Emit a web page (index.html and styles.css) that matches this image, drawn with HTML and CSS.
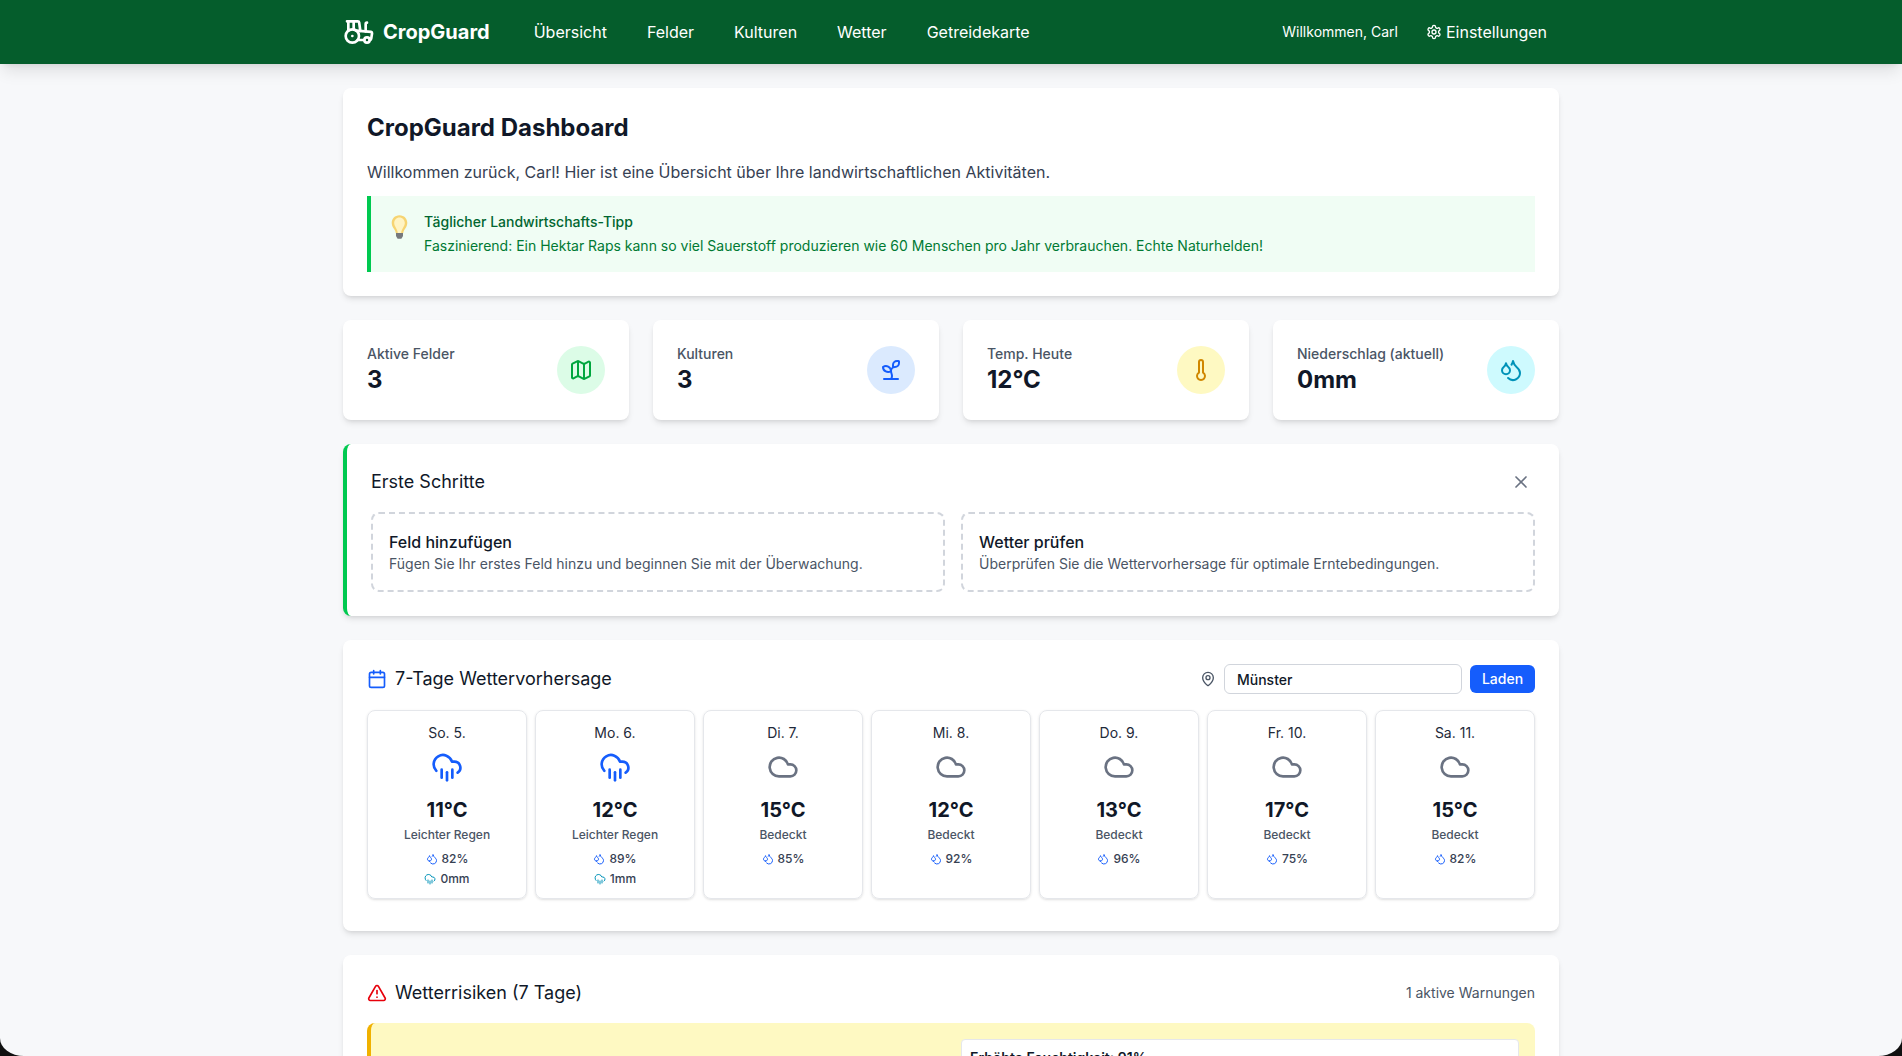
FILE: index.html
```html
<!DOCTYPE html>
<html lang="de">
<head>
<meta charset="utf-8">
<title>CropGuard Dashboard</title>
<link rel="stylesheet" href="styles.css">
</head>
<body>
<svg class="sprite" aria-hidden="true">
  <symbol id="i-tractor" viewBox="0 0 24 24"><path d="m10 11 11 .9a1 1 0 0 1 .8 1.1l-.665 4.158a1 1 0 0 1-.988.842H20"/><path d="M16 18h-5"/><path d="M18 5a1 1 0 0 0-1 1v5.573"/><path d="M3 4h8.129a1 1 0 0 1 .99.863L13 11.246"/><path d="M4 11V4"/><path d="M7 15h.01"/><path d="M8 10.1V4"/><circle cx="18" cy="18" r="2"/><circle cx="7" cy="15" r="5"/></symbol>
  <symbol id="i-gear" viewBox="0 0 24 24"><path d="M12.22 2h-.44a2 2 0 0 0-2 2v.18a2 2 0 0 1-1 1.73l-.43.25a2 2 0 0 1-2 0l-.15-.08a2 2 0 0 0-2.73.73l-.22.38a2 2 0 0 0 .73 2.73l.15.1a2 2 0 0 1 1 1.72v.51a2 2 0 0 1-1 1.74l-.15.09a2 2 0 0 0-.73 2.73l.22.38a2 2 0 0 0 2.73.73l.15-.08a2 2 0 0 1 2 0l.43.25a2 2 0 0 1 1 1.73V20a2 2 0 0 0 2 2h.44a2 2 0 0 0 2-2v-.18a2 2 0 0 1 1-1.73l.43-.25a2 2 0 0 1 2 0l.15.08a2 2 0 0 0 2.73-.73l.22-.39a2 2 0 0 0-.73-2.73l-.15-.08a2 2 0 0 1-1-1.74v-.5a2 2 0 0 1 1-1.74l.15-.09a2 2 0 0 0 .73-2.73l-.22-.38a2 2 0 0 0-2.73-.73l-.15.08a2 2 0 0 1-2 0l-.43-.25a2 2 0 0 1-1-1.73V4a2 2 0 0 0-2-2z"/><circle cx="12" cy="12" r="3"/></symbol>
  <symbol id="i-map" viewBox="0 0 24 24"><path d="M14.106 5.553a2 2 0 0 0 1.788 0l3.659-1.83A1 1 0 0 1 21 4.619v12.764a1 1 0 0 1-.553.894l-4.553 2.277a2 2 0 0 1-1.788 0l-4.212-2.106a2 2 0 0 0-1.788 0l-3.659 1.83A1 1 0 0 1 3 19.381V6.618a1 1 0 0 1 .553-.894l4.553-2.277a2 2 0 0 1 1.788 0z"/><path d="M15 5.764v15"/><path d="M9 3.236v15"/></symbol>
  <symbol id="i-sprout" viewBox="0 0 24 24"><path d="M14 9.536V7a4 4 0 0 1 4-4h1.5a.5.5 0 0 1 .5.5V5a4 4 0 0 1-4 4 4 4 0 0 0-4 4c0 2 1 3 1 5a5 5 0 0 1-1 3"/><path d="M4 9a5 5 0 0 1 8 4 5 5 0 0 1-8-4"/><path d="M5 21h14"/></symbol>
  <symbol id="i-thermo" viewBox="0 0 24 24"><path d="M14 4v10.54a4 4 0 1 1-4 0V4a2 2 0 0 1 4 0Z"/></symbol>
  <symbol id="i-drops" viewBox="0 0 24 24"><path d="M7 16.3c2.2 0 4-1.83 4-4.05 0-1.16-.57-2.26-1.71-3.19S7.29 6.75 7 5.3c-.29 1.45-1.14 2.84-2.29 3.76S3 11.1 3 12.25c0 2.22 1.8 4.05 4 4.05z"/><path d="M12.56 6.6A10.97 10.97 0 0 0 14 3.02c.5 2.5 2 4.9 4 6.5s3 3.5 3 5.5a6.98 6.98 0 0 1-11.91 4.97"/></symbol>
  <symbol id="i-x" viewBox="0 0 24 24"><path d="M18 6 6 18"/><path d="m6 6 12 12"/></symbol>
  <symbol id="i-cal" viewBox="0 0 24 24"><path d="M8 2v4"/><path d="M16 2v4"/><rect width="18" height="18" x="3" y="4" rx="2"/><path d="M3 10h18"/></symbol>
  <symbol id="i-pin" viewBox="0 0 24 24"><path d="M20 10c0 4.993-5.539 10.193-7.399 11.799a1 1 0 0 1-1.202 0C9.539 20.193 4 14.993 4 10a8 8 0 0 1 16 0"/><circle cx="12" cy="10" r="3"/></symbol>
  <symbol id="i-rain" viewBox="0 0 24 24"><path d="M4 14.899A7 7 0 1 1 15.71 8h1.79a4.5 4.5 0 0 1 2.5 8.242"/><path d="M16 14v6"/><path d="M8 14v6"/><path d="M12 16v6"/></symbol>
  <symbol id="i-cloud" viewBox="0 0 24 24"><path d="M17.5 19H9a7 7 0 1 1 6.71-9h1.79a4.5 4.5 0 1 1 0 9Z"/></symbol>
  <symbol id="i-alert" viewBox="0 0 24 24"><path d="m21.73 18-8-14a2 2 0 0 0-3.48 0l-8 14A2 2 0 0 0 4 21h16a2 2 0 0 0 1.73-3"/><path d="M12 9v4"/><path d="M12 17h.01"/></symbol>
</svg>
<div class="page">
  <header class="topbar">
    <div class="topbar-inner">
      <a class="brand"><svg class="ico ico-32"><use href="#i-tractor"/></svg><span>CropGuard</span></a>
      <nav class="nav">
        <a>Übersicht</a><a>Felder</a><a>Kulturen</a><a>Wetter</a><a>Getreidekarte</a>
      </nav>
      <div class="user">
        <span class="welcome">Willkommen, Carl</span>
        <a class="settings"><svg class="ico ico-16"><use href="#i-gear"/></svg>Einstellungen</a>
      </div>
    </div>
  </header>

  <main class="main">
    <section class="card">
      <h1 class="page-title">CropGuard Dashboard</h1>
      <p class="lead">Willkommen zurück, Carl! Hier ist eine Übersicht über Ihre landwirtschaftlichen Aktivitäten.</p>
      <div class="tip">
        <div class="bulb">
          <svg width="17" height="24" viewBox="0 0 17 24">
            <path class="bulb-glass" d="M8.5.3C3.800.3.700 3.900.700 8c0 3 1.700 5.100 3 7 .7 1.100 1 2.200 1.100 3.300h7.400c.1-1.100.4-2.200 1.100-3.300 1.300-1.900 3-4 3-7C16.300 3.900 13.200.3 8.500.3z"/>
            <path class="bulb-core" d="M8.500 2.500C5.300 2.500 3.200 5.100 3.200 8c0 3.600 3.300 5.500 3.600 10.300h3.400c.3-4.800 3.600-6.700 3.600-10.300 0-2.900-2.100-5.500-5.300-5.500z"/>
            <path class="bulb-base" d="M5 18h7v3l-1.600 2.800H6.600L5 21z"/>
          </svg>
        </div>
        <div>
          <div class="tip-title">Täglicher Landwirtschafts-Tipp</div>
          <div class="tip-text">Faszinierend: Ein Hektar Raps kann so viel Sauerstoff produzieren wie 60 Menschen pro Jahr verbrauchen. Echte Naturhelden!</div>
        </div>
      </div>
    </section>

    <section class="stats">
      <div class="stat">
        <div><div class="stat-label">Aktive Felder</div><div class="stat-value">3</div></div>
        <div class="stat-icon green"><svg class="ico ico-24"><use href="#i-map"/></svg></div>
      </div>
      <div class="stat">
        <div><div class="stat-label">Kulturen</div><div class="stat-value">3</div></div>
        <div class="stat-icon blue"><svg class="ico ico-24"><use href="#i-sprout"/></svg></div>
      </div>
      <div class="stat">
        <div><div class="stat-label">Temp. Heute</div><div class="stat-value">12°C</div></div>
        <div class="stat-icon yellow"><svg class="ico ico-24"><use href="#i-thermo"/></svg></div>
      </div>
      <div class="stat">
        <div><div class="stat-label">Niederschlag (aktuell)</div><div class="stat-value">0mm</div></div>
        <div class="stat-icon cyan"><svg class="ico ico-24"><use href="#i-drops"/></svg></div>
      </div>
    </section>

    <section class="card card-accent">
      <div class="row-between steps-head">
        <h2 class="section-title">Erste Schritte</h2>
        <svg class="ico ico-20 close"><use href="#i-x"/></svg>
      </div>
      <div class="steps">
        <div class="step">
          <div class="step-title">Feld hinzufügen</div>
          <div class="step-text">Fügen Sie Ihr erstes Feld hinzu und beginnen Sie mit der Überwachung.</div>
        </div>
        <div class="step">
          <div class="step-title">Wetter prüfen</div>
          <div class="step-text">Überprüfen Sie die Wettervorhersage für optimale Erntebedingungen.</div>
        </div>
      </div>
    </section>

    <section class="card">
      <div class="row-between forecast-head">
        <h2 class="section-title with-icon"><svg class="ico ico-20 c-blue"><use href="#i-cal"/></svg>7-Tage Wettervorhersage</h2>
        <div class="location">
          <svg class="ico ico-16 c-gray"><use href="#i-pin"/></svg>
          <input class="loc-input" type="text" value="Münster">
          <button class="btn" type="button">Laden</button>
        </div>
      </div>
      <div class="days">
        <div class="day">
          <div class="day-name">So. 5.</div>
          <svg class="ico ico-32 day-icon c-blue"><use href="#i-rain"/></svg>
          <div class="day-temp">11°C</div>
          <div class="day-desc">Leichter Regen</div>
          <div class="day-meta"><svg class="ico ico-12 c-blue"><use href="#i-drops"/></svg>82%</div>
          <div class="day-meta"><svg class="ico ico-12 c-cyan"><use href="#i-rain"/></svg>0mm</div>
        </div>
        <div class="day">
          <div class="day-name">Mo. 6.</div>
          <svg class="ico ico-32 day-icon c-blue"><use href="#i-rain"/></svg>
          <div class="day-temp">12°C</div>
          <div class="day-desc">Leichter Regen</div>
          <div class="day-meta"><svg class="ico ico-12 c-blue"><use href="#i-drops"/></svg>89%</div>
          <div class="day-meta"><svg class="ico ico-12 c-cyan"><use href="#i-rain"/></svg>1mm</div>
        </div>
        <div class="day">
          <div class="day-name">Di. 7.</div>
          <svg class="ico ico-32 day-icon c-slate"><use href="#i-cloud"/></svg>
          <div class="day-temp">15°C</div>
          <div class="day-desc">Bedeckt</div>
          <div class="day-meta"><svg class="ico ico-12 c-blue"><use href="#i-drops"/></svg>85%</div>
        </div>
        <div class="day">
          <div class="day-name">Mi. 8.</div>
          <svg class="ico ico-32 day-icon c-slate"><use href="#i-cloud"/></svg>
          <div class="day-temp">12°C</div>
          <div class="day-desc">Bedeckt</div>
          <div class="day-meta"><svg class="ico ico-12 c-blue"><use href="#i-drops"/></svg>92%</div>
        </div>
        <div class="day">
          <div class="day-name">Do. 9.</div>
          <svg class="ico ico-32 day-icon c-slate"><use href="#i-cloud"/></svg>
          <div class="day-temp">13°C</div>
          <div class="day-desc">Bedeckt</div>
          <div class="day-meta"><svg class="ico ico-12 c-blue"><use href="#i-drops"/></svg>96%</div>
        </div>
        <div class="day">
          <div class="day-name">Fr. 10.</div>
          <svg class="ico ico-32 day-icon c-slate"><use href="#i-cloud"/></svg>
          <div class="day-temp">17°C</div>
          <div class="day-desc">Bedeckt</div>
          <div class="day-meta"><svg class="ico ico-12 c-blue"><use href="#i-drops"/></svg>75%</div>
        </div>
        <div class="day">
          <div class="day-name">Sa. 11.</div>
          <svg class="ico ico-32 day-icon c-slate"><use href="#i-cloud"/></svg>
          <div class="day-temp">15°C</div>
          <div class="day-desc">Bedeckt</div>
          <div class="day-meta"><svg class="ico ico-12 c-blue"><use href="#i-drops"/></svg>82%</div>
        </div>
      </div>
    </section>

    <section class="card">
      <div class="row-between risks-head">
        <h2 class="section-title with-icon"><svg class="ico ico-20 c-red"><use href="#i-alert"/></svg>Wetterrisiken (7 Tage)</h2>
        <span class="risk-count">1 aktive Warnungen</span>
      </div>
      <div class="risk">
        <div></div>
        <div class="risk-box">Erhöhte Feuchtigkeit: 91%</div>
      </div>
    </section>
  </main>
</div>
<div class="window-mask"></div>
</body>
</html>
```

FILE: styles.css
```css
* { box-sizing: border-box; }
html, body { margin: 0; padding: 0; height: 100%; }
body {
  background: #f7f8fa;
  color: #101828;
  font-family: "Inter", "Liberation Sans", sans-serif;
  font-size: 16px;
  line-height: 24px;
  overflow: hidden;
}
h1, h2, p { margin: 0; }
.sprite { position: absolute; width: 0; height: 0; }
.page { height: 100vh; overflow: hidden; }

.ico { fill: none; stroke: currentColor; stroke-width: 2; stroke-linecap: round; stroke-linejoin: round; flex: none; display: block; }
.ico-12 { width: 12px; height: 12px; }
.ico-16 { width: 16px; height: 16px; }
.ico-20 { width: 20px; height: 20px; }
.ico-24 { width: 24px; height: 24px; }
.ico-32 { width: 32px; height: 32px; }
.c-blue { color: #155dfc; }
.c-cyan { color: #0092b8; }
.c-gray { color: #4a5565; }
.c-slate { color: #6a7282; }
.c-red { color: #e7000b; }

.topbar { position: relative; z-index: 2; background: #055d2c; color: #fff; box-shadow: 0 10px 15px -3px rgba(0,0,0,.1), 0 4px 6px -4px rgba(0,0,0,.1); }
.topbar-inner { width: 1216px; height: 64px; margin: 0 auto; display: flex; align-items: center; }
.brand { display: flex; align-items: center; gap: 8px; font-size: 20px; font-weight: 700; line-height: 28px; }
.nav { display: flex; gap: 40px; margin-left: 44px; font-weight: 400; }
.user { margin-left: auto; display: flex; align-items: center; gap: 16px; padding-right: 12px; }
.welcome { font-size: 14px; line-height: 20px; font-weight: 400; }
.settings { display: flex; align-items: center; gap: 4px; padding-left: 12px; font-weight: 400; }

.main { width: 1216px; margin: 0 auto; padding-top: 24px; display: flex; flex-direction: column; gap: 24px; }
.card { background: #fff; border-radius: 8px; padding: 24px; box-shadow: 0 4px 6px -1px rgba(0,0,0,.1), 0 2px 4px -2px rgba(0,0,0,.1); }
.card-accent { border-left: 4px solid #00c950; }

.page-title { font-size: 24px; line-height: 32px; font-weight: 700; margin-bottom: 16px; }
.lead { color: #364153; margin-bottom: 12px; }
.tip { display: flex; background: #f0fdf4; border-left: 4px solid #00c950; padding: 16px; font-size: 14px; line-height: 20px; }
.bulb { width: 37px; padding-left: 4px; padding-top: 3px; flex: none; }
.bulb-glass { fill: #f6d472; }
.bulb-core { fill: #fff4c4; }
.bulb-base { fill: #77797c; }
.tip-title { color: #016630; font-weight: 500; margin-bottom: 4px; }
.tip-text { color: #007a33; }

.stats { display: grid; grid-template-columns: repeat(4, 1fr); gap: 24px; }
.stat { background: #fff; border-radius: 8px; padding: 24px; display: flex; align-items: center; justify-content: space-between; box-shadow: 0 4px 6px -1px rgba(0,0,0,.1), 0 2px 4px -2px rgba(0,0,0,.1); }
.stat-label { font-size: 14px; line-height: 20px; font-weight: 500; color: #4a5565; }
.stat-value { font-size: 24px; line-height: 32px; font-weight: 700; }
.stat-icon { width: 48px; height: 48px; border-radius: 50%; display: flex; align-items: center; justify-content: center; }
.green { background: #dcfce7; color: #00a63e; }
.blue { background: #dbeafe; color: #155dfc; }
.yellow { background: #fef9c2; color: #d08700; }
.cyan { background: #cefafe; color: #0092b8; }

.row-between { display: flex; align-items: center; justify-content: space-between; }
.section-title { font-size: 18px; line-height: 28px; font-weight: 400; }
.with-icon { display: flex; align-items: center; gap: 8px; }
.steps-head { margin-bottom: 16px; }
.close { color: #6a7282; margin-right: 4px; }
.steps { display: grid; grid-template-columns: 1fr 1fr; gap: 16px; }
.step { border: 2px dashed #d1d5dc; border-radius: 8px; padding: 16px; }
.step-title { font-weight: 500; }
.step-text { font-size: 14px; line-height: 20px; color: #4a5565; }

.forecast-head { margin-bottom: 16px; height: 30px; }
.location { display: flex; align-items: center; gap: 8px; }
.loc-input { width: 238px; height: 30px; border: 1px solid #d1d5dc; border-radius: 6px; padding: 4px 12px; font: 500 14px/20px "Inter", sans-serif; color: #101828; background: #fff; }
.btn { width: 65px; height: 28px; border: 0; border-radius: 6px; background: #155dfc; color: #fff; font: 500 14px/20px "Inter", sans-serif; padding: 0; }
.days { display: grid; grid-template-columns: repeat(7, 1fr); gap: 8px; padding-bottom: 8px; }
.day { border: 1px solid #e5e7eb; border-radius: 8px; padding: 12px 12px 11px; text-align: center; box-shadow: 0 1px 3px 0 rgba(0,0,0,.1), 0 1px 2px -1px rgba(0,0,0,.1); }
.day-name { font-size: 14px; line-height: 20px; color: #1e2939; }
.day-icon { margin: 8px auto 0; }
.day-temp { font-size: 20px; line-height: 28px; font-weight: 700; margin-top: 13px; }
.day-desc { font-size: 12px; line-height: 16px; font-weight: 500; color: #4a5565; margin-top: 3px; margin-bottom: 8px; }
.day-meta { display: flex; align-items: center; justify-content: center; gap: 4px; font-size: 12px; line-height: 16px; font-weight: 500; color: #364153; }
.day-meta + .day-meta { margin-top: 4px; }

.risks-head { margin-bottom: 16px; }
.risk-count { font-size: 14px; line-height: 20px; color: #4a5565; }
.risk { display: grid; grid-template-columns: 1fr 1fr; gap: 16px; background: #fef9c2; border-left: 4px solid #f0b100; border-radius: 8px; padding: 16px; }
.risk-box { background: #fff; border: 1px solid #e5e7eb; border-radius: 4px; padding: 8px; font-size: 14px; line-height: 20px; font-weight: 600; }

.window-mask { position: fixed; inset: 0; border-radius: 0 0 24px 24px / 0 0 18px 18px; box-shadow: 0 0 0 40px #101010; pointer-events: none; z-index: 5; }
```
